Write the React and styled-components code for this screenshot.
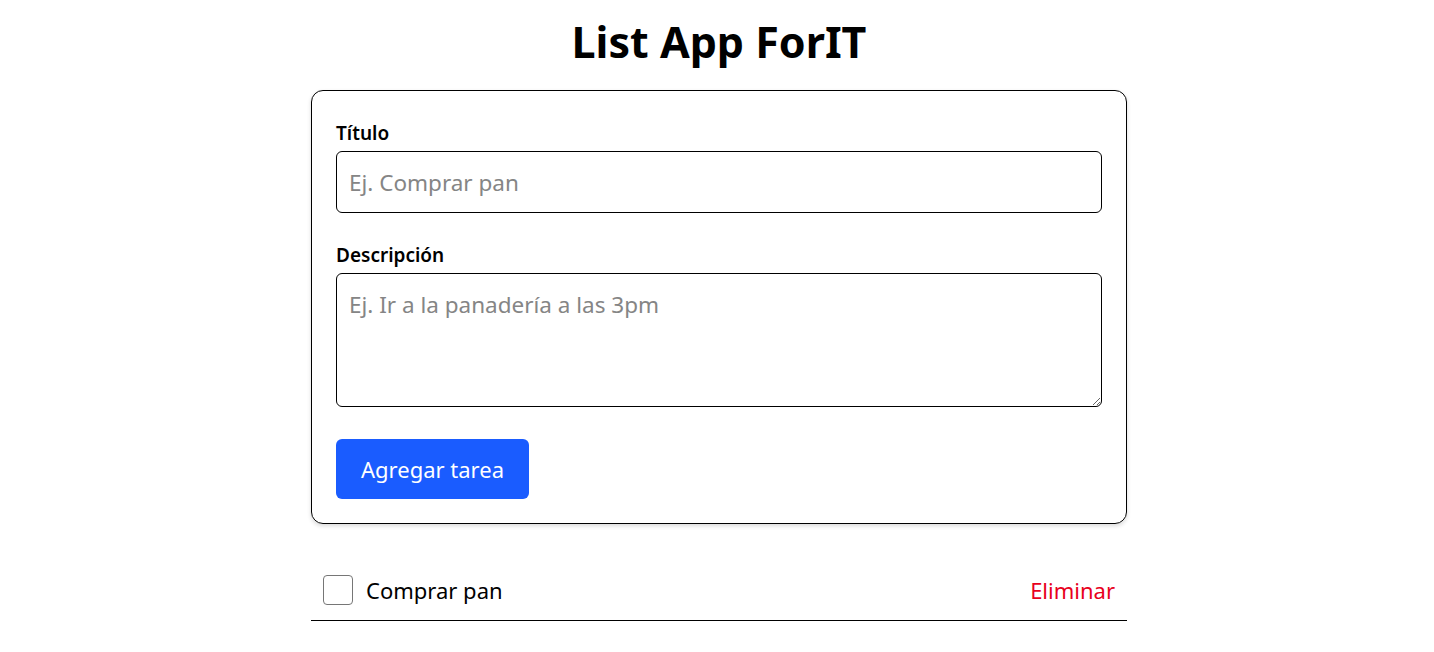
import styled, { createGlobalStyle } from "styled-components";

const GlobalStyle = createGlobalStyle`
    body {
        margin: 0;
        background: #ffffff;
        font-family: "Noto Sans", "Open Sans", sans-serif;
        color: #000000;
    }
    * { box-sizing: border-box; }
`;

const tareas = [{ id: 1, titulo: "Comprar pan", hecha: false }];

export default function App() {
    return (
        <Page>
            <GlobalStyle />
            <Title>List App ForIT</Title>
            <Card>
                <Field>
                    <Label htmlFor="titulo">Título</Label>
                    <Input id="titulo" placeholder="Ej. Comprar pan" />
                </Field>
                <Field>
                    <Label htmlFor="desc">Descripción</Label>
                    <TextArea id="desc" placeholder="Ej. Ir a la panadería a las 3pm" />
                </Field>
                <AddButton>Agregar tarea</AddButton>
            </Card>
            <TaskList>
                {tareas.map((t) => (
                    <TaskRow key={t.id}>
                        <TaskLeft>
                            <Check type="checkbox" defaultChecked={t.hecha} />
                            <TaskText>{t.titulo}</TaskText>
                        </TaskLeft>
                        <DeleteButton>Eliminar</DeleteButton>
                    </TaskRow>
                ))}
            </TaskList>
        </Page>
    );
}

const Page = styled.div`
    width: 816px;
    margin: 0 auto;
    position: relative;
    left: 2px;
    padding-top: 12px;
`;

const Title = styled.h1`
    margin: 0 0 18px 0;
    text-align: center;
    font-size: 43px;
    line-height: 60px;
    font-weight: 700;
`;

const Card = styled.div`
    border: 1px solid #000000;
    border-radius: 12px;
    padding: 24px;
    box-shadow: 0 2px 4px rgba(0, 0, 0, 0.15);
    display: flex;
    flex-direction: column;
    align-items: flex-start;
`;

const Field = styled.div`
    width: 100%;
    display: flex;
    flex-direction: column;
    margin-bottom: 24px;
`;

const Label = styled.label`
    font-size: 19px;
    font-weight: 600;
    line-height: 26px;
    margin: 5px 0 5px 0;
`;

const Input = styled.input`
    width: 100%;
    height: 62px;
    border: 1px solid #000000;
    border-radius: 6px;
    padding: 0 12px;
    font-family: inherit;
    font-size: 22.5px;
    outline: none;

    &::placeholder {
        color: #858585;
    }
`;

const TextArea = styled.textarea`
    width: 100%;
    height: 134px;
    border: 1px solid #000000;
    border-radius: 6px;
    padding: 16px 12px;
    font-family: inherit;
    font-size: 22.5px;
    line-height: 1.3;
    outline: none;
    resize: vertical;

    &::placeholder {
        color: #858585;
    }
`;

const AddButton = styled.button`
    width: 193px;
    height: 60px;
    margin-top: 8px;
    background-color: #1a5cff;
    color: #ffffff;
    border: none;
    border-radius: 6px;
    font-family: inherit;
    font-size: 22px;
    cursor: pointer;
`;

const TaskList = styled.ul`
    list-style: none;
    margin: 36px 0 0 0;
    padding: 0;
`;

const TaskRow = styled.li`
    display: flex;
    align-items: center;
    justify-content: space-between;
    height: 61px;
    padding: 0 12px;
    border-bottom: 1px solid #000000;
`;

const TaskLeft = styled.div`
    display: flex;
    align-items: center;
    gap: 13px;
`;

const Check = styled.input`
    appearance: none;
    width: 30px;
    height: 30px;
    margin: 0;
    border: 1px solid #767676;
    border-radius: 4px;
    background: #ffffff;
`;

const TaskText = styled.span`
    font-size: 22px;
`;

const DeleteButton = styled.button`
    background: none;
    border: none;
    padding: 0;
    color: #e8001c;
    font-family: inherit;
    font-size: 22px;
    cursor: pointer;
`;
